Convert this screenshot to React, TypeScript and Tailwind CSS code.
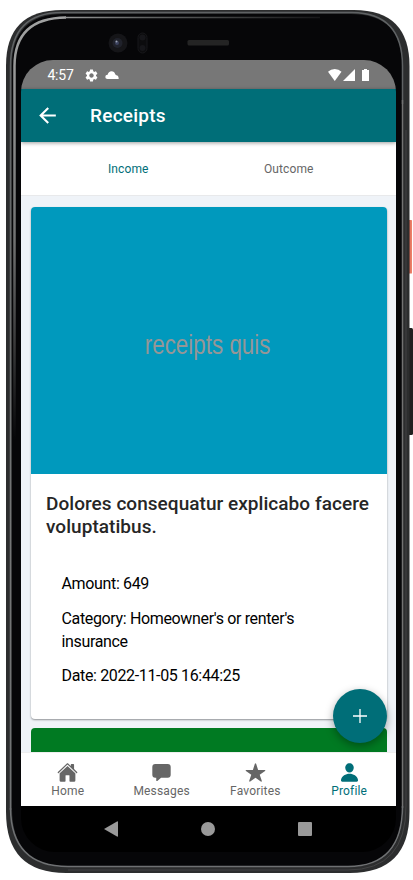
import type { ReactNode } from "react";
import { IoHome, IoChatbox, IoStar, IoPerson } from "react-icons/io5";
import { MdSettings, MdArrowBack } from "react-icons/md";

function PhoneFrame() {
  return (
    <svg className="absolute left-0 top-0" width="413" height="880" viewBox="0 0 413 880" fill="none">
      <defs>
        <linearGradient id="rail" x1="0" y1="0" x2="0" y2="440" gradientUnits="userSpaceOnUse">
          <stop offset="0" stopColor="#a5a6a6" />
          <stop offset="0.3" stopColor="#8b8c8c" />
          <stop offset="0.55" stopColor="#707171" />
          <stop offset="1" stopColor="#060608" />
        </linearGradient>
        <linearGradient id="outerRail" x1="0" y1="0" x2="0" y2="880" gradientUnits="userSpaceOnUse">
          <stop offset="0.1" stopColor="#5f6264" />
          <stop offset="0.6" stopColor="#747676" />
          <stop offset="1" stopColor="#6f7173" />
        </linearGradient>
        <linearGradient id="topLine" x1="0" x2="413" y1="0" y2="0" gradientUnits="userSpaceOnUse">
          <stop offset="0.1" stopColor="#a5a6a6" />
          <stop offset="0.35" stopColor="#626464" />
          <stop offset="0.85" stopColor="#0a0a0c" />
        </linearGradient>
        <linearGradient id="power" x1="409" x2="413" y1="0" y2="0" gradientUnits="userSpaceOnUse">
          <stop stopColor="#c45e4c" />
          <stop offset="0.5" stopColor="#ef8068" />
          <stop offset="1" stopColor="#e77e67" />
        </linearGradient>
      </defs>
      <rect x="406" y="220" width="6" height="53.5" rx="0.5" fill="url(#power)" />
      <rect x="406" y="328" width="7" height="107" rx="1.5" fill="#202020" />
      <path d="M6 66Q6 10 62 10H354Q409.500 10 409.500 66V812Q409.500 873 350 873H66Q6 873 6 812Z" fill="#2c2d2e" />
      <path d="M12 66Q12 14 64 14H350Q403 14 403 66V808Q403 867 348 867H68Q12 867 12 808Z" fill="#060608" />
      <path d="M10.500 810V66Q10.500 12.500 62 12.500H352Q402.500 13 402.500 66V104" stroke="url(#outerRail)" strokeWidth="1.500" />
      <path d="M14.500 440V66Q14.500 18 66 17.500" stroke="url(#rail)" strokeWidth="2.500" />
      <path d="M65 17.500H320" stroke="url(#topLine)" strokeWidth="1.500" />
      <path d="M402.500 100V808" stroke="#727272" strokeWidth="1.500" />
      <path d="M402.500 806Q402.500 866.500 348 866.500H68Q11 866.500 10.500 808" stroke="#6f7173" strokeWidth="1.500" />
      <path d="M406 130V806Q406 870 348 870H68" stroke="#434344" strokeWidth="1" />
      <circle cx="118" cy="43" r="9.500" fill="#151518" />
      <circle cx="117.500" cy="43" r="5" fill="#20222b" />
      <circle cx="117" cy="43" r="2" fill="#3b425e" />
      <circle cx="116.500" cy="41.500" r="1" fill="#9aa2b4" />
      <rect x="138" y="33" width="9" height="20" rx="4.500" fill="#0c0c0e" stroke="#17171a" />
      <circle cx="142.500" cy="37.500" r="3" fill="#16161a" />
      <circle cx="142.500" cy="48" r="3" fill="#16161a" />
      <rect x="187.500" y="40" width="41.500" height="5.500" rx="1.500" fill="#242424" />
    </svg>
  );
}

function StatusBar() {
  return (
    <div className="flex h-[29px] shrink-0 items-center bg-[#777777] pl-[26.500px] pr-[27px] text-white">
      <span className="w-[36px] pt-[1px] text-[14px] leading-none tracking-[-0.250px]">4:57</span>
      <MdSettings className="mt-[1px] size-[15px]" />
      <svg className="ml-[6.500px] mt-[1px]" width="14" height="8" viewBox="0 0 14 8" fill="currentColor">
        <path d="M2.500 8Q0.300 8 0.300 5.900T2.600 3.700Q3.500 0.200 6.500 0.200T10.200 3.200L11.300 4.200Q13.700 4.500 13.700 8Z" />
      </svg>
      <svg className="ml-auto mt-[1px]" width="41" height="12" viewBox="0 0 41 12" fill="currentColor">
        <path d="M0 2.800Q2.800 0 6.750 0T13.500 2.800L6.750 12Z" />
        <path d="M15 12 27 0V12Z" />
        <path d="M34 1H36V0H39V1H41V12H34Z" />
      </svg>
    </div>
  );
}

function Tab({ icon, label, active = false }: { icon: ReactNode; label: string; active?: boolean }) {
  return (
    <div className={`flex flex-1 flex-col items-center pt-[9px] ${active ? "text-[#006e78]" : "text-[#666666]"}`}>
      {icon}
      <span className="mt-[1px] text-[12px] leading-[14px] tracking-[0.180px]">{label}</span>
    </div>
  );
}

export default function App() {
  return (
    <div className="relative h-[880px] w-[413px] overflow-hidden bg-white pl-[21px] pt-[60px] font-['Roboto',sans-serif]">
      <PhoneFrame />
      <div className="relative flex h-[792px] w-[375px] flex-col overflow-hidden rounded-b-[34px] rounded-tl-[32px] rounded-tr-[32px] bg-black">
        <StatusBar />
        <header className="z-10 flex h-[53px] shrink-0 items-center bg-[#006e78] pl-[14px] text-white shadow-[0_1px_4px_rgba(0,0,0,0.4)]">
          <MdArrowBack className="size-[25px]" />
          <h1 className="ml-[30px] text-[19px] font-medium leading-none tracking-[0.250px]">Receipts</h1>
        </header>
        <div className="flex h-[54px] shrink-0 border-b border-[#e8e9eb] bg-white px-[27px] pt-[20px] text-[12px] leading-[14px] tracking-[0.120px]">
          <span className="flex-1 text-center text-[#006e78]">Income</span>
          <span className="flex-1 text-center text-[#666666]">Outcome</span>
        </div>
        <main className="relative h-[556px] shrink-0 overflow-hidden bg-[#eff3f8] pl-[10px] pr-[9px] pt-[11px]">
          <article className="h-[512px] overflow-hidden rounded-[4px] bg-white shadow-[0_1px_2px_rgba(0,0,0,0.4)]">
            <div className="flex h-[267px] items-center justify-center bg-[#0099bd]">
              <span className="mr-[3px] mt-[9px] scale-x-[0.800] whitespace-nowrap font-['Liberation_Sans',sans-serif] text-[28px] leading-none text-[#969696]">receipts quis</span>
            </div>
            <h2 className="px-[15px] pt-[18px] text-[19px] font-medium leading-[23px] tracking-[0.045px] text-[#262626]">Dolores consequatur explicabo facere voluptatibus.</h2>
            <div className="flex flex-col gap-[11.500px] px-[30.500px] pt-[34px] text-[16px] leading-[23px] tracking-[-0.350px] text-black">
              <p>Amount: 649</p>
              <p>Category: Homeowner's or renter's insurance</p>
              <p>Date: 2022-11-05 16:44:25</p>
            </div>
          </article>
          <article className="mt-[9px] h-[100px] rounded-t-[4px] bg-[#007a22]" />
          <button className="absolute right-[9px] top-[493px] flex size-[54px] items-center justify-center rounded-full bg-[#006e78] text-white shadow-[0_3px_9px_rgba(0,0,0,0.35)]">
            <svg width="14" height="14" viewBox="0 0 14 14" fill="none" stroke="currentColor" strokeWidth="1.300">
              <path d="M0 7H14M7 0V14" />
            </svg>
          </button>
        </main>
        <nav className="flex h-[54px] shrink-0 border-t border-[#eeeeee] bg-white">
          <Tab icon={<IoHome className="size-[21px]" />} label="Home" />
          <Tab icon={<IoChatbox className="size-[21px]" />} label="Messages" />
          <Tab icon={<IoStar className="size-[21px]" />} label="Favorites" />
          <Tab icon={<IoPerson className="size-[21px]" />} label="Profile" active />
        </nav>
        <div className="flex h-[46px] items-center justify-between pl-[83px] pr-[84px]">
          <svg width="14" height="16" viewBox="0 0 14 16"><path d="M0 8 13 0.500Q14 0 14 1V15Q14 16 13 15.500Z" fill="#999999" /></svg>
          <div className="size-[14px] rounded-full bg-[#999999]" />
          <div className="size-[14px] rounded-[1px] bg-[#999999]" />
        </div>
      </div>
    </div>
  );
}
